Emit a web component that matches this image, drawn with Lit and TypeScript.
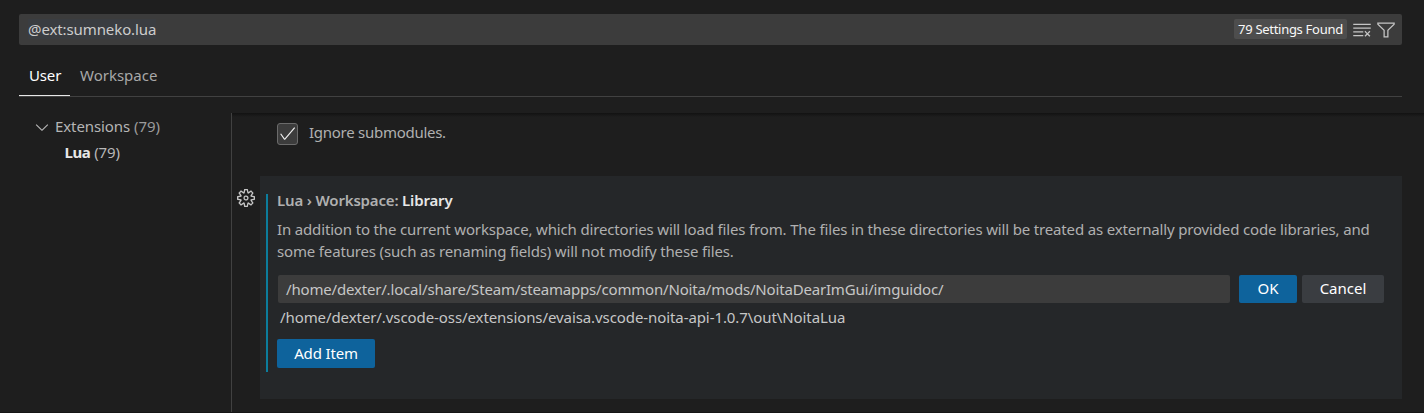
import { LitElement, html, css, svg } from "lit";
import { customElement, property } from "lit/decorators.js";

const ICONS: Record<string, { box: string; d: string }> = {
  clear: { box: "0 0 16 16", d: "M10 12.6l.7.7 1.6-1.6 1.6 1.6.8-.7L13 11l1.7-1.6-.8-.8-1.6 1.7-1.6-1.7-.7.8 1.6 1.6-1.6 1.6zM1 4h14V3H1v1zm0 3h14V6H1v1zm8 2.5V9H1v1h8v-.5zM9 13v-1H1v1h8z" },
  filter: { box: "0 0 16 16", d: "M15 2v1.67l-5 4.759V14H6V8.429l-5-4.76V2h14zM7 8v5h2V8l5-4.76V3H2v.24L7 8z" },
  chevron: { box: "0 0 16 16", d: "M7.976 10.072l4.357-4.357.62.618L8.284 11h-.618L3 6.333l.619-.618 4.357 4.357z" },
  check: { box: "0 0 16 16", d: "M14.431 3.323l-8.47 10-.79-.036-3.35-4.77.818-.574 2.978 4.24 8.051-9.506.764.646z" },
  gear: { box: "0 0 24 24", d: "M19.85 8.75l4.15.83v4.84l-4.15.83 2.35 3.52-3.43 3.43-3.52-2.35-.83 4.15H9.58l-.83-4.15-3.52 2.35-3.43-3.43 2.35-3.52L0 14.42V9.58l4.15-.83L1.8 5.23 5.23 1.8l3.52 2.35L9.58 0h4.84l.83 4.15 3.52-2.35 3.43 3.43-2.35 3.52zm-1.57 5.07l4-.81v-2l-4-.81-.54-1.3 2.29-3.43-1.43-1.43-3.43 2.29-1.3-.54-.81-4h-2l-.81 4-1.3.54-3.43-2.29-1.43 1.43L6.38 8.9l-.54 1.3-4 .81v2l4 .81.54 1.3-2.29 3.43 1.43 1.43 3.43-2.29 1.3.54.81 4h2l.81-4 1.3-.54 3.43 2.29 1.43-1.43-2.29-3.43.54-1.3zm-8.186-4.672A3.43 3.43 0 0 1 12 8.57 3.44 3.44 0 0 1 15.43 12a3.43 3.43 0 1 1-5.336-2.852zm.956 4.274c.281.188.612.288.95.288A1.7 1.7 0 0 0 13.71 12a1.71 1.71 0 1 0-2.66 1.422z" },
};

@customElement("ui-icon")
class UiIcon extends LitElement {
  @property() name = "";
  static styles = css`
    :host { display: block; flex: none; }
    svg { display: block; width: 100%; height: 100%; fill: currentColor; }
  `;
  render() {
    const icon = ICONS[this.name];
    return html`<svg viewBox=${icon.box}>${svg`<path fill-rule="evenodd" clip-rule="evenodd" d=${icon.d}></path>`}</svg>`;
  }
}

@customElement("app-root")
class AppRoot extends LitElement {
  static styles = css`
    :host {
      display: flex; flex-direction: column; box-sizing: border-box;
      width: 100%; height: 413px; overflow: hidden;
      background: #1e1e1e; color: #cccccc; border-bottom: 1px solid #151515;
      font: 15px/22px "Noto Sans", sans-serif;
      white-space: nowrap;
    }
    * { box-sizing: border-box; }
    .search {
      display: flex; align-items: center; flex: none; height: 31px;
      margin: 14px 22px 0 19px; padding: 0 6px 0 9px;
      background: #3c3c3c; border-radius: 2px;
    }
    .query { flex: 1; height: 24px; letter-spacing: -0.1px; }
    .query span { background: #3a3d41; }
    .count {
      height: 20px; width: 113px; padding: 0 4px; margin: -1px 1px 0 0; border-radius: 2px;
      background: #4d4d4d; color: #f8f8f8; font-size: 13px; line-height: 20px;
      letter-spacing: -0.29px;
    }
    .tool { width: 20px; height: 20px; margin-left: 4px; color: #c5c5c5; }
    .tabs {
      display: flex; flex: none; height: 36px; margin: 16px 22px 0 19px;
      border-bottom: 1px solid #414141;
    }
    .tab { height: 35px; padding: 3px 10px 0; color: #a8a8a8; border-bottom: 1px solid transparent; }
    .tab.active { color: #ffffff; border-color: #e7e7e7; width: 51px; letter-spacing: -0.15px; }
    .body { display: flex; flex: 1; min-height: 0; margin-top: 16px; }
    .tree { width: 231px; flex: none; padding: 1px 0 0 32px; color: #b5b5b5; letter-spacing: -0.1px; }
    .row { display: flex; align-items: center; height: 26px; }
    .row:first-child { margin-top: -1px; }
    .row + .row { padding-left: 32.5px; letter-spacing: -0.5px; }
    .row b { color: #e7e7e7; }
    .row .n { color: #9b9b9b; margin-left: 4px; }
    .row b + .n { color: #b8b8b8; letter-spacing: -0.1px; }
    .chev { width: 20px; height: 20px; margin: 1px 3px 0 0; }
    .content {
      flex: 1; min-width: 0; border-left: 1px solid #414141;
      background: linear-gradient(#121212, #1e1e1e) no-repeat top / 100% 4px;
    }
    .option { display: flex; height: 22px; margin: 10px 0 0 45px; color: #b0b0b0; letter-spacing: -0.27px; line-height: 18px; }
    .box {
      display: flex; justify-content: center; width: 21px; height: 22px; margin-right: 11px;
      background: #3c3c3c; border: 1px solid #6b6b6b; border-radius: 3px; color: #f0f0f0;
    }
    .box ui-icon { width: 19px; height: 19px; }
    .setting { display: flex; margin-top: 31px; }
    .gear { width: 18px; height: 18px; margin: 13px 5px 0 5px; color: #c5c5c5; }
    .card { flex: 1; min-width: 0; height: 223px; margin-right: 22px; padding: 18px 18px 0 6px; background: #252729; }
    .mod { height: 178px; border-left: 2px solid #0c7d9d; padding-left: 9px; color: #b0b0b0; }
    .title { font-weight: 600; height: 22px; line-height: 12px; letter-spacing: -0.17px; }
    .title b { color: #e7e7e7; font-weight: 600; }
    .desc { margin-top: 2px; letter-spacing: -0.157px; }
    .edit { display: flex; margin: 13px 0 0 1px; height: 28px; color: #c6c6c6; }
    .field { width: 952px; flex: none; margin-right: 9px; padding-left: 8px; line-height: 28px; background: #3c3c3c; border-radius: 2px; letter-spacing: -0.18px; }
    .btn { flex: none; border-radius: 2px; color: #fff; text-align: center; line-height: 27px; }
    .ok { width: 58px; background: #0e639c; margin-right: 5px; }
    .cancel { width: 82px; background: #3a3d41; }
    .value { margin: 3px 0 0 3px; color: #c6c6c6; letter-spacing: -0.085px; }
    .add { width: 98px; height: 29px; margin-top: 11px; line-height: 29px; background: #0e639c; letter-spacing: -0.15px; }
  `;
  render() {
    return html`
      <div class="search">
        <div class="query"><span>@ext:sumneko.lua</span></div>
        <div class="count">79 Settings Found</div>
        <ui-icon class="tool" name="clear"></ui-icon>
        <ui-icon class="tool" name="filter"></ui-icon>
      </div>
      <div class="tabs">
        <div class="tab active">User</div>
        <div class="tab">Workspace</div>
      </div>
      <div class="body">
        <div class="tree">
          <div class="row"><ui-icon class="chev" name="chevron"></ui-icon>Extensions<span class="n">(79)</span></div>
          <div class="row"><b>Lua</b><span class="n">(79)</span></div>
        </div>
        <div class="content">
          <div class="option"><div class="box"><ui-icon name="check"></ui-icon></div>Ignore submodules.</div>
          <div class="setting">
            <ui-icon class="gear" name="gear"></ui-icon>
            <div class="card">
              <div class="mod">
                <div class="title">Lua › Workspace: <b>Library</b></div>
                <div class="desc">In addition to the current workspace, which directories will load files from. The files in these directories will be treated as externally provided code libraries, and<br />some features (such as renaming fields) will not modify these files.</div>
                <div class="edit">
                  <div class="field">/home/dexter/.local/share/Steam/steamapps/common/Noita/mods/NoitaDearImGui/imguidoc/</div>
                  <div class="btn ok">OK</div>
                  <div class="btn cancel">Cancel</div>
                </div>
                <div class="value">/home/dexter/.vscode-oss/extensions/evaisa.vscode-noita-api-1.0.7\\out\\NoitaLua</div>
                <div class="btn add">Add Item</div>
              </div>
            </div>
          </div>
        </div>
      </div>
    `;
  }
}
